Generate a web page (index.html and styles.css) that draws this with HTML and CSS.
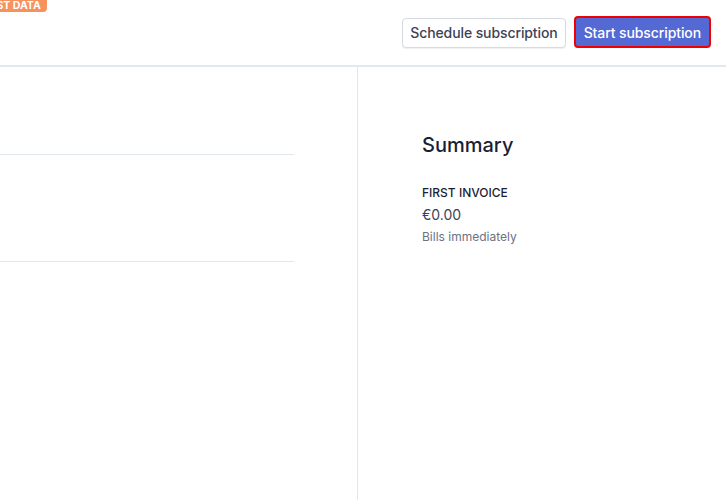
FILE: index.html
```html
<!DOCTYPE html>
<html>
<head>
<meta charset="utf-8">
<link rel="stylesheet" href="styles.css">
</head>
<body>
<div class="badge">TEST DATA</div>
<header class="topbar">
  <div class="actions">
    <button class="btn btn-secondary">Schedule subscription</button>
    <button class="btn btn-primary">Start subscription</button>
  </div>
</header>
<main class="layout">
  <section class="left">
    <div class="row row-first"></div>
    <div class="row"></div>
  </section>
  <aside class="right">
    <h2 class="summary-title">Summary</h2>
    <div class="label">FIRST INVOICE</div>
    <div class="amount">€0.00</div>
    <div class="note">Bills immediately</div>
  </aside>
</main>
</body>
</html>
```
FILE: styles.css
```css
* { box-sizing: border-box; }
html, body { margin: 0; padding: 0; height: 100%; }
body {
  font-family: Inter, "Noto Sans", sans-serif;
  background: #fff;
  color: #1a1f36;
  position: relative;
  overflow: hidden;
}
.badge {
  position: absolute;
  top: 0;
  left: -23px;
  height: 12px;
  padding: 0 6px;
  background: #f5925e;
  color: #fff;
  font-size: 10.5px;
  font-weight: 700;
  line-height: 12px;
  letter-spacing: 0;
  border-radius: 0 0 4px 4px;
}
.topbar {
  height: 67px;
  border-bottom: 2px solid #e3e8ee;
  display: flex;
  justify-content: flex-end;
  align-items: flex-start;
  padding: 16px 15px 0 0;
}
.actions { display: flex; gap: 8px; align-items: center; }
.btn {
  font-family: inherit;
  font-size: 14px;
  font-weight: 500;
  height: 30px;
  padding: 0 8px;
  border-radius: 4px;
  cursor: pointer;
  letter-spacing: -0.1px;
}
.btn-secondary {
  background: #fff;
  color: #3c4257;
  border: 1px solid #d5dbe1;
  box-shadow: 0 1px 1px rgba(0,0,0,0.06);
  margin-top: 1px;
  padding: 0 7px;
}
.btn-primary {
  height: 32px;
  background: #5469d4;
  color: #fff;
  border: 2px solid #f00000;
  padding: 0 8px;
}
.layout {
  display: flex;
  height: calc(100% - 67px);
}
.left {
  width: 358px;
  border-right: 1px solid #e3e8ee;
  padding-top: 87px;
}
.row {
  width: 294px;
  height: 107px;
  border-top: 1px solid #e3e8ee;
}
.right {
  padding: 66px 0 0 64px;
}
.summary-title {
  margin: 0;
  font-size: 20px;
  font-weight: 500;
  line-height: 24px;
  color: #1a1f36;
}
.label {
  margin-top: 28px;
  font-size: 12px;
  font-weight: 500;
  line-height: 16px;
  color: #1a1f36;
}
.amount {
  margin-top: 4px;
  font-size: 14px;
  line-height: 20px;
  color: #3c4257;
}
.note {
  margin-top: 4px;
  font-size: 12px;
  line-height: 16px;
  color: #697386;
}
```
